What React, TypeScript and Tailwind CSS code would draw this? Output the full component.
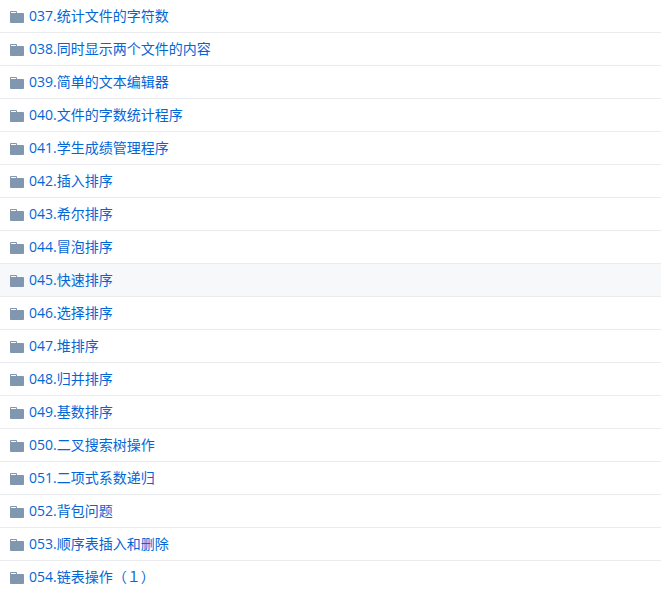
import React from 'react';

const rows = [
  '037.统计文件的字符数',
  '038.同时显示两个文件的内容',
  '039.简单的文本编辑器',
  '040.文件的字数统计程序',
  '041.学生成绩管理程序',
  '042.插入排序',
  '043.希尔排序',
  '044.冒泡排序',
  '045.快速排序',
  '046.选择排序',
  '047.堆排序',
  '048.归并排序',
  '049.基数排序',
  '050.二叉搜索树操作',
  '051.二项式系数递归',
  '052.背包问题',
  '053.顺序表插入和删除',
  '054.链表操作（１）',
];

const FolderIcon = () => (
  <svg className="w-[14px] h-4 mt-[2px] shrink-0 text-[#8197b0]" viewBox="0 0 14 16" fill="currentColor">
    <path fillRule="evenodd" d="M13 4H7V3c0-.66-.31-1-1-1H1c-.55 0-1 .45-1 1v10c0 .55.45 1 1 1h12c.55 0 1-.45 1-1V5c0-.55-.45-1-1-1zM6 4H1V3h5v1z" />
  </svg>
);

export default function App() {
  return (
    <div className="h-[592px] overflow-hidden bg-white font-['Open_Sans','Noto_Sans_CJK_SC',sans-serif] text-sm">
      {rows.map((name) => (
        <div
          key={name}
          className={`flex items-center h-[33px] border-b border-[#eaecef] pl-[10px] gap-[5px] ${name.startsWith('045') ? 'bg-[#f6f8fa]' : ''}`}
        >
          <FolderIcon />
          <a href="#" className="text-[#0366d6] leading-5">{name}</a>
        </div>
      ))}
    </div>
  );
}
